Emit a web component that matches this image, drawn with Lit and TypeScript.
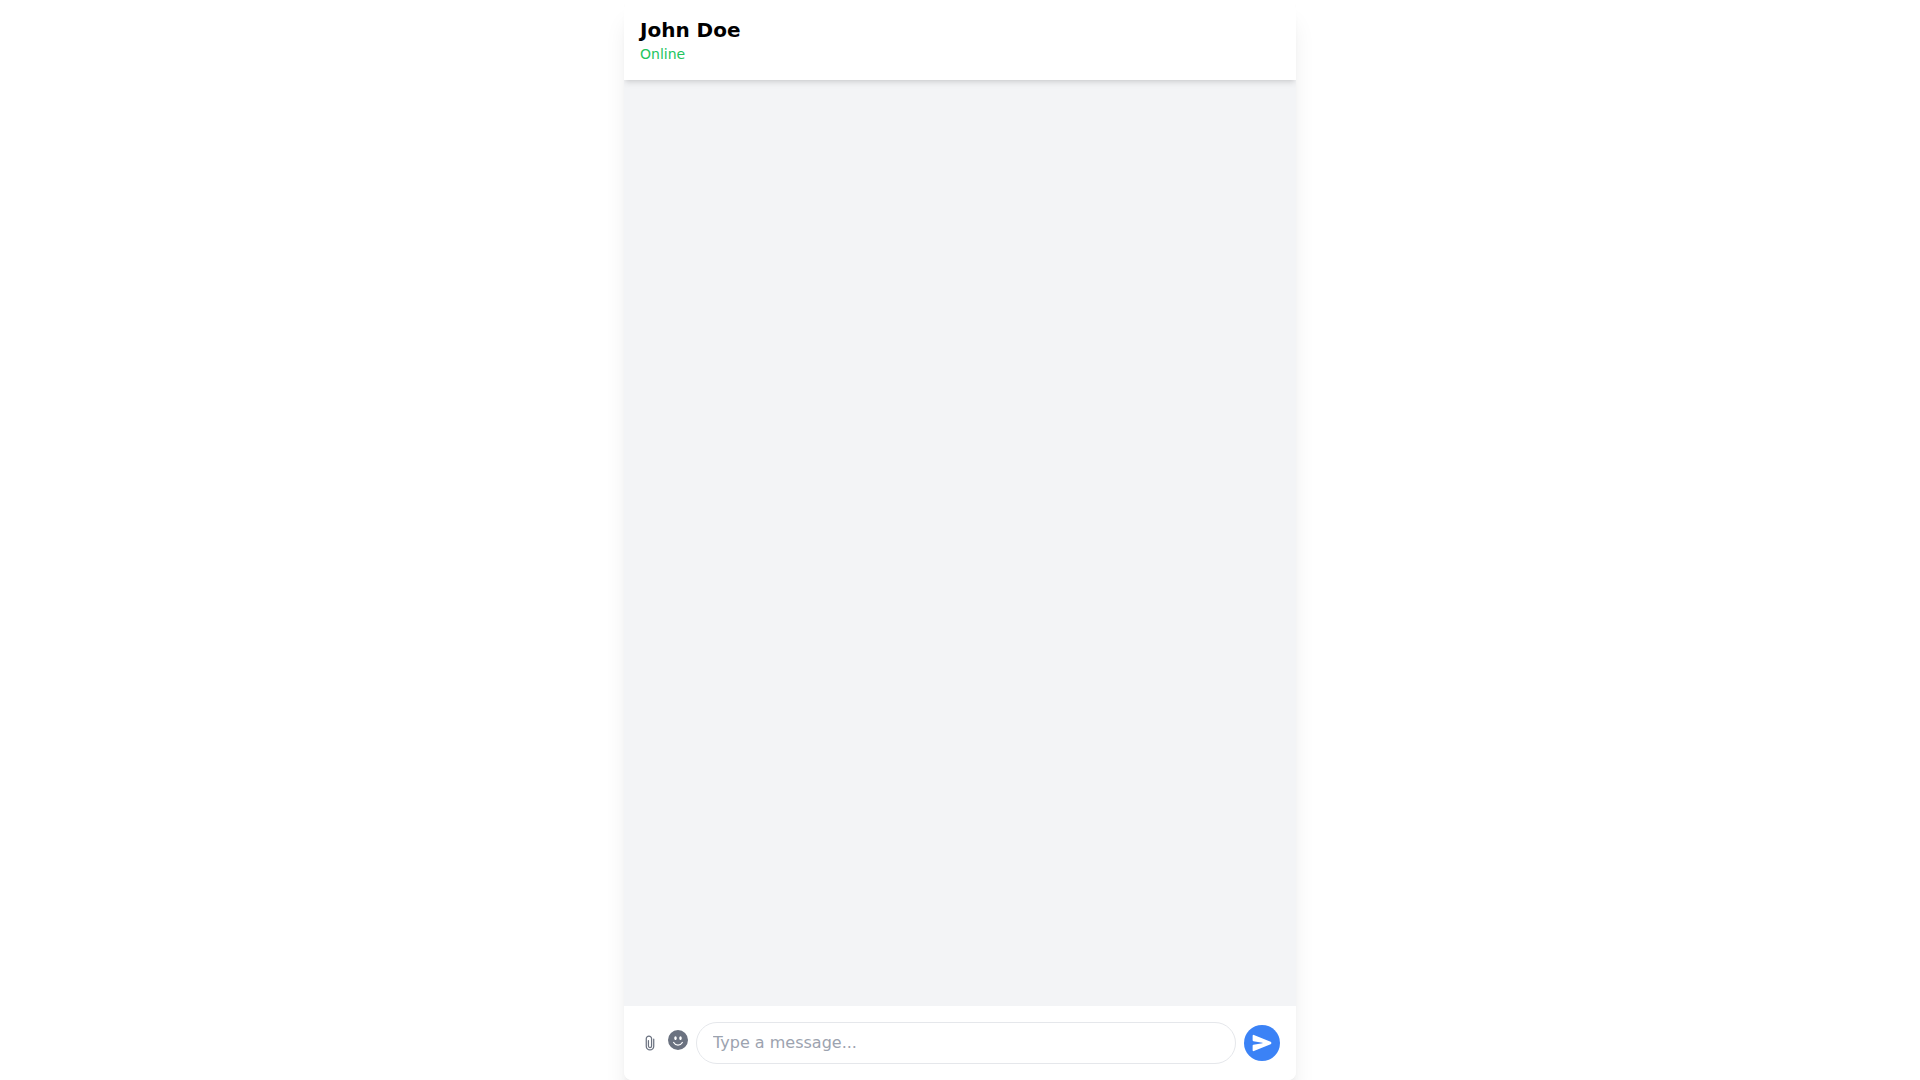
import { LitElement, html, css } from "lit";
import { customElement, state } from "lit/decorators.js";

@customElement("app-root")
export class AppRoot extends LitElement {
  static styles = css`
    :host {
      display: block;
      font-family: "DejaVu Sans", sans-serif;
      font-size: 16px;
      line-height: 24px;
      color: #000;
      background: #fff;
    }
    *,
    *::before,
    *::after {
      box-sizing: border-box;
    }
    .chat {
      display: flex;
      flex-direction: column;
      height: 100vh;
      max-width: 672px;
      margin: 0 auto;
      overflow: hidden;
      border-radius: 8px;
      background: #fff;
      box-shadow:
        0 20px 25px -5px rgb(0 0 0 / 0.1),
        0 8px 10px -6px rgb(0 0 0 / 0.1);
    }
    .header {
      position: relative;
      z-index: 1;
      padding: 16px;
      background: #fff;
      box-shadow:
        0 4px 6px -1px rgb(0 0 0 / 0.1),
        0 2px 4px -2px rgb(0 0 0 / 0.1);
    }
    .name {
      margin: 0;
      font-size: 20px;
      line-height: 28px;
      font-weight: 700;
    }
    .status {
      margin: 0;
      font-size: 14px;
      line-height: 20px;
      color: #22c55e;
    }
    .messages {
      flex: 1;
      overflow-y: auto;
      background: #f3f4f6;
    }
    .composer {
      display: flex;
      align-items: center;
      gap: 8px;
      padding: 16px;
      background: #fff;
    }
    button {
      margin: 0;
      padding: 0;
      border: 0;
      background: transparent;
      font: inherit;
      color: #6b7280;
      cursor: pointer;
    }
    svg {
      display: block;
      width: 20px;
      height: 20px;
    }
    .field {
      flex: 1;
      min-width: 0;
      margin: 0;
      padding: 8px 16px;
      border: 1px solid #e5e7eb;
      border-radius: 9999px;
      background: #fff;
      font: inherit;
      color: inherit;
      outline: none;
    }
    .field::placeholder {
      color: #9ca3af;
      opacity: 1;
    }
    .field:focus {
      border-color: #3b82f6;
    }
    button.send {
      padding: 8px;
      border-radius: 9999px;
      background: #3b82f6;
      color: #fff;
    }
  `;

  @state() private draft = "";

  private onInput(e: Event) {
    this.draft = (e.target as HTMLInputElement).value;
  }

  private onSubmit(e: Event) {
    e.preventDefault();
    this.draft = "";
  }

  render() {
    return html`
      <main class="chat">
        <header class="header">
          <h1 class="name">John Doe</h1>
          <p class="status">Online</p>
        </header>
        <section class="messages"></section>
        <form class="composer" @submit=${this.onSubmit}>
          <button type="button" aria-label="Attach file">
            <svg viewBox="0 0 512 512" aria-hidden="true">
              <path
                fill="none"
                stroke="currentColor"
                stroke-linecap="round"
                stroke-miterlimit="10"
                stroke-width="32"
                d="M216.08 192v143.85a40.08 40.08 0 0080.15 0l.13-188.55a67.94 67.94 0 10-135.87 0v189.82a95.51 95.51 0 10191 0V159.74"
              />
            </svg>
          </button>
          <div class="emoji">
            <button type="button" aria-label="Choose emoji">
              <svg viewBox="0 0 16 16" fill="currentColor" aria-hidden="true">
                <path
                  d="M8 16A8 8 0 1 0 8 0a8 8 0 0 0 0 16M7 6.5C7 7.328 6.552 8 6 8s-1-.672-1-1.5S5.448 5 6 5s1 .672 1 1.5M4.285 9.567a.5.5 0 0 1 .683.183A3.5 3.5 0 0 0 8 11.5a3.5 3.5 0 0 0 3.032-1.75.5.5 0 1 1 .866.5A4.5 4.5 0 0 1 8 12.5a4.5 4.5 0 0 1-3.898-2.25.5.5 0 0 1 .183-.683M10 8c-.552 0-1-.672-1-1.5S9.448 5 10 5s1 .672 1 1.5S10.552 8 10 8"
                />
              </svg>
            </button>
          </div>
          <input
            class="field"
            type="text"
            aria-label="Message"
            placeholder="Type a message..."
            .value=${this.draft}
            @input=${this.onInput}
          />
          <button class="send" type="submit" aria-label="Send">
            <svg viewBox="0 0 512 512" fill="currentColor" aria-hidden="true">
              <path
                d="M476.59 227.05l-.16-.07L49.35 49.84A23.56 23.56 0 0027.14 52 24.65 24.65 0 0016 72.59v113.29a24 24 0 0019.52 23.57l232.93 43.07a4 4 0 010 7.86L35.53 303.45A24 24 0 0016 327v113.31A23.57 23.57 0 0026.59 460a23.94 23.94 0 0013.22 4 24.55 24.55 0 009.52-1.93L476.4 285.94l.19-.09a32 32 0 000-58.8z"
              />
            </svg>
          </button>
        </form>
      </main>
    `;
  }
}
